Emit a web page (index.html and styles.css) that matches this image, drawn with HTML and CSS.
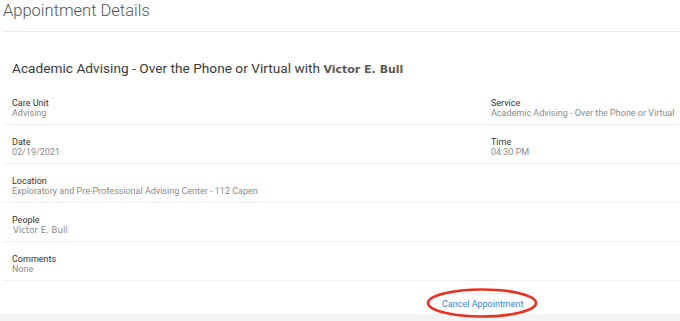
FILE: index.html
```html
<!DOCTYPE html>
<html>
<head>
<meta charset="utf-8">
<link rel="stylesheet" href="styles.css">
</head>
<body>
<div class="page">
  <h1 class="page-title">Appointment Details</h1>
  <div class="card">
    <h2 class="appt-heading">Academic Advising - Over the Phone or Virtual with <span class="person">Victor E. Bull</span></h2>
    <div class="row">
      <div class="field"><div class="label">Care Unit</div><div class="value">Advising</div></div>
      <div class="field"><div class="label">Service</div><div class="value">Academic Advising - Over the Phone or Virtual</div></div>
    </div>
    <div class="row">
      <div class="field"><div class="label">Date</div><div class="value">02/19/2021</div></div>
      <div class="field"><div class="label">Time</div><div class="value">04:30 PM</div></div>
    </div>
    <div class="row">
      <div class="field"><div class="label">Location</div><div class="value">Exploratory and Pre-Professional Advising Center - 112 Capen</div></div>
    </div>
    <div class="row">
      <div class="field"><div class="label">People</div><div class="value person-value">Victor E. Bull</div></div>
    </div>
    <div class="row">
      <div class="field"><div class="label">Comments</div><div class="value">None</div></div>
    </div>
    <div class="actions">
      <button class="cancel-btn">Cancel Appointment
        <svg class="circle-mark" width="112" height="31" viewBox="0 0 112 31"><ellipse cx="56" cy="15" rx="54" ry="13.5" fill="none" stroke="#e8321f" stroke-width="2.6"/></svg>
      </button>
    </div>
  </div>
  <div class="footer-band"></div>
</div>
</body>
</html>
```
FILE: styles.css
```css
html, body {
  margin: 0;
  padding: 0;
  background: #fff;
}
body {
  font-family: Roboto, "Liberation Sans", Arial, sans-serif;
  overflow: hidden;
  height: 321px;
}
.page {
  width: 680px;
}
.page-title {
  margin: 0 0 0 3px;
  font-size: 16.5px;
  font-weight: 300;
  line-height: 22px;
  color: #555;
  padding-bottom: 9px;
  border-bottom: 1px solid #ececec;
}
.card {
  margin-left: 3px;
  padding-top: 26px;
}
.appt-heading {
  margin: 0 0 6px 9px;
  font-size: 13.7px;
  font-weight: 400;
  line-height: 20px;
  color: #3a3a3a;
}
.person {
  font-family: "DejaVu Sans", Verdana, sans-serif;
  font-weight: bold;
  font-size: 11px;
  color: #5a5a5a;
}
.row {
  display: grid;
  grid-template-columns: 479px 1fr;
  padding: 12px 0 5px 9px;
  border-bottom: 1px solid #efefef;
}
.label {
  font-size: 9px;
  line-height: 10px;
  color: #333;
}
.value {
  font-size: 9px;
  line-height: 11px;
  color: #8a8a8a;
  white-space: nowrap;
}
.person-value {
  font-family: "DejaVu Sans", Verdana, sans-serif;
  font-size: 8.6px;
  padding-left: 1px;
}
.actions {
  display: flex;
  padding: 12px 0 0 430px;
}
.cancel-btn {
  position: relative;
  font-family: Roboto, "Liberation Sans", Arial, sans-serif;
  font-size: 9px;
  line-height: 12px;
  color: #3d7fc6;
  background: #fff;
  border: 1px solid #f0f0f0;
  border-bottom: none;
  padding: 4px 8px;
  cursor: pointer;
}
.circle-mark {
  position: absolute;
  left: -8px;
  top: -6px;
  pointer-events: none;
}
.footer-band {
  height: 20px;
  background: #f4f4f4;
}
```
